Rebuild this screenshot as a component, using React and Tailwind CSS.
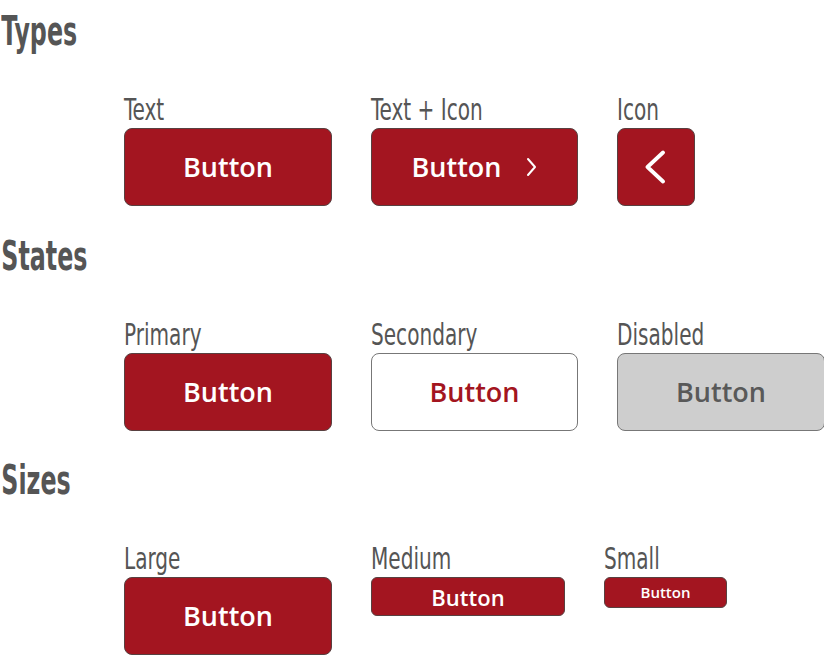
const condensed = "font-['DejaVu_Sans_Condensed','Liberation_Sans',sans-serif] origin-left whitespace-nowrap"
const heading = `${condensed} font-bold text-[40px] leading-[44px] h-[44px] text-[#555555] pl-[2px] scale-x-[0.66]`
const label = `${condensed} text-[31px] leading-[32px] text-[#555555] mb-[3px] scale-x-[0.72]`
const btnText = "font-['Open_Sans',sans-serif] font-semibold"
const primary = `rounded-[8px] bg-[#a31520] border border-[#584040] text-white ${btnText}`

function ChevronRight({ className }) {
  return (
    <svg viewBox="0 0 12 20" className={className} fill="none" stroke="currentColor" strokeWidth="2" strokeLinecap="round" strokeLinejoin="round">
      <path d="M3 2l7 8-7 8" />
    </svg>
  )
}

function ChevronLeft({ className }) {
  return (
    <svg viewBox="0 0 22 34" className={className} fill="none" stroke="currentColor" strokeWidth="3.8" strokeLinecap="round" strokeLinejoin="round">
      <path d="M19 2.5L3.5 17 19 31.5" />
    </svg>
  )
}

function Item({ title, children }) {
  return (
    <div className="flex flex-col items-start">
      <div className={label}>{title}</div>
      {children}
    </div>
  )
}

function Section({ title, children, className = '' }) {
  return (
    <section className={className}>
      <h2 className={heading}>{title}</h2>
      <div className="flex items-start gap-[39px] pl-[124px] mt-[40px]">{children}</div>
    </section>
  )
}

export default function App() {
  return (
    <div className="w-[824px] h-[656px] bg-white overflow-hidden pt-[9px]">
      <Section title="Types">
        <Item title="Text">
          <button className={`w-[208px] h-[78px] text-[27px] ${primary}`}>Button</button>
        </Item>
        <Item title="Text + Icon">
          <button className={`w-[207px] h-[78px] text-[27px] flex items-center justify-center gap-[24px] ${primary}`}>
            <span>Button</span>
            <ChevronRight className="w-[12px] h-[20px]" />
          </button>
        </Item>
        <Item title="Icon">
          <button className="w-[78px] h-[78px] rounded-[8px] bg-[#a31520] border border-[#584040] text-white flex items-center justify-center">
            <ChevronLeft className="w-[22px] h-[34px] -ml-[3px]" />
          </button>
        </Item>
      </Section>

      <Section title="States" className="mt-[28px]">
        <Item title="Primary">
          <button className={`w-[208px] h-[78px] text-[27px] ${primary}`}>Button</button>
        </Item>
        <Item title="Secondary">
          <button className={`w-[207px] h-[78px] rounded-[8px] bg-white border border-[#777777] text-[#a31520] text-[27px] ${btnText}`}>
            Button
          </button>
        </Item>
        <Item title="Disabled">
          <button className={`w-[208px] h-[78px] rounded-[8px] bg-[#cecece] border border-[#777777] text-[#595959] text-[27px] ${btnText}`}>
            Button
          </button>
        </Item>
      </Section>

      <Section title="Sizes" className="mt-[27px]">
        <Item title="Large">
          <button className={`w-[208px] h-[78px] text-[27px] ${primary}`}>Button</button>
        </Item>
        <Item title="Medium">
          <button className={`w-[194px] h-[39px] !rounded-[6px] text-[22px] leading-none ${primary}`}>Button</button>
        </Item>
        <Item title="Small">
          <button className={`w-[123px] h-[31px] !rounded-[6px] text-[15px] leading-none pb-[1px] ${primary}`}>Button</button>
        </Item>
      </Section>
    </div>
  )
}
